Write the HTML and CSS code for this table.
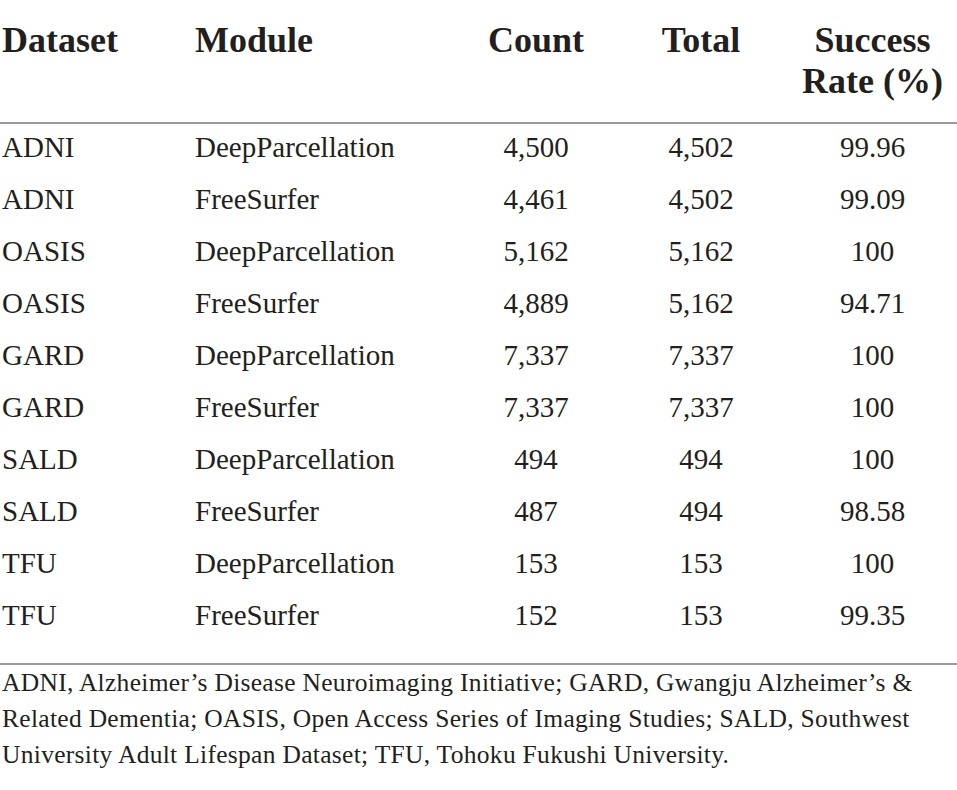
FILE: index.html
```html
<!DOCTYPE html>
<html lang="en">
<head>
<meta charset="utf-8">
<title>Table</title>
<link rel="stylesheet" href="styles.css">
</head>
<body>
<div class="wrap">
<table class="data">
  <thead>
    <tr>
      <th class="c1">Dataset</th>
      <th class="c2">Module</th>
      <th class="c3">Count</th>
      <th class="c4">Total</th>
      <th class="c5">Success<br>Rate (%)</th>
    </tr>
  </thead>
  <tbody>
    <tr><td class="c1">ADNI</td><td class="c2">DeepParcellation</td><td class="c3">4,500</td><td class="c4">4,502</td><td class="c5">99.96</td></tr>
    <tr><td class="c1">ADNI</td><td class="c2">FreeSurfer</td><td class="c3">4,461</td><td class="c4">4,502</td><td class="c5">99.09</td></tr>
    <tr><td class="c1">OASIS</td><td class="c2">DeepParcellation</td><td class="c3">5,162</td><td class="c4">5,162</td><td class="c5">100</td></tr>
    <tr><td class="c1">OASIS</td><td class="c2">FreeSurfer</td><td class="c3">4,889</td><td class="c4">5,162</td><td class="c5">94.71</td></tr>
    <tr><td class="c1">GARD</td><td class="c2">DeepParcellation</td><td class="c3">7,337</td><td class="c4">7,337</td><td class="c5">100</td></tr>
    <tr><td class="c1">GARD</td><td class="c2">FreeSurfer</td><td class="c3">7,337</td><td class="c4">7,337</td><td class="c5">100</td></tr>
    <tr><td class="c1">SALD</td><td class="c2">DeepParcellation</td><td class="c3">494</td><td class="c4">494</td><td class="c5">100</td></tr>
    <tr><td class="c1">SALD</td><td class="c2">FreeSurfer</td><td class="c3">487</td><td class="c4">494</td><td class="c5">98.58</td></tr>
    <tr><td class="c1">TFU</td><td class="c2">DeepParcellation</td><td class="c3">153</td><td class="c4">153</td><td class="c5">100</td></tr>
    <tr class="last"><td class="c1">TFU</td><td class="c2">FreeSurfer</td><td class="c3">152</td><td class="c4">153</td><td class="c5">99.35</td></tr>
  </tbody>
</table>
<p class="note">ADNI, Alzheimer’s Disease Neuroimaging Initiative; GARD, Gwangju Alzheimer’s &amp; Related Dementia; OASIS, Open Access Series of Imaging Studies; SALD, Southwest University Adult Lifespan Dataset; TFU, Tohoku Fukushi University.</p>
</div>
</body>
</html>
```

FILE: styles.css
```css
html, body {
  margin: 0;
  padding: 0;
  background: #ffffff;
}

body {
  font-family: "Liberation Serif", "Times New Roman", serif;
  color: #231f20;
}

.wrap {
  width: 957px;
}

.data {
  width: 957px;
  border-collapse: collapse;
  table-layout: fixed;
}

.data th {
  font-size: 36px;
  font-weight: bold;
  line-height: 41px;
  padding: 20px 0 20px 0;
  vertical-align: top;
  border-bottom: 2px solid #9a9a9a;
}

.data td {
  font-size: 29px;
  line-height: 46px;
  padding: 0 0 6px 0;
  vertical-align: top;
}

.data tr.last td {
  padding-bottom: 25px;
  border-bottom: 2px solid #9a9a9a;
}

.data .c1 { width: 193px; text-align: left; padding-left: 2px; }
.data .c2 { width: 275px; text-align: left; }
.data .c3 { width: 132px; text-align: center; }
.data .c4 { width: 198px; text-align: center; }
.data .c5 { text-align: center; padding-right: 12px; }

.note {
  margin: 0;
  width: 928px;
  padding: 0 0 0 2px;
  font-size: 25.5px;
  letter-spacing: 0.3px;
  line-height: 36px;
}
```
